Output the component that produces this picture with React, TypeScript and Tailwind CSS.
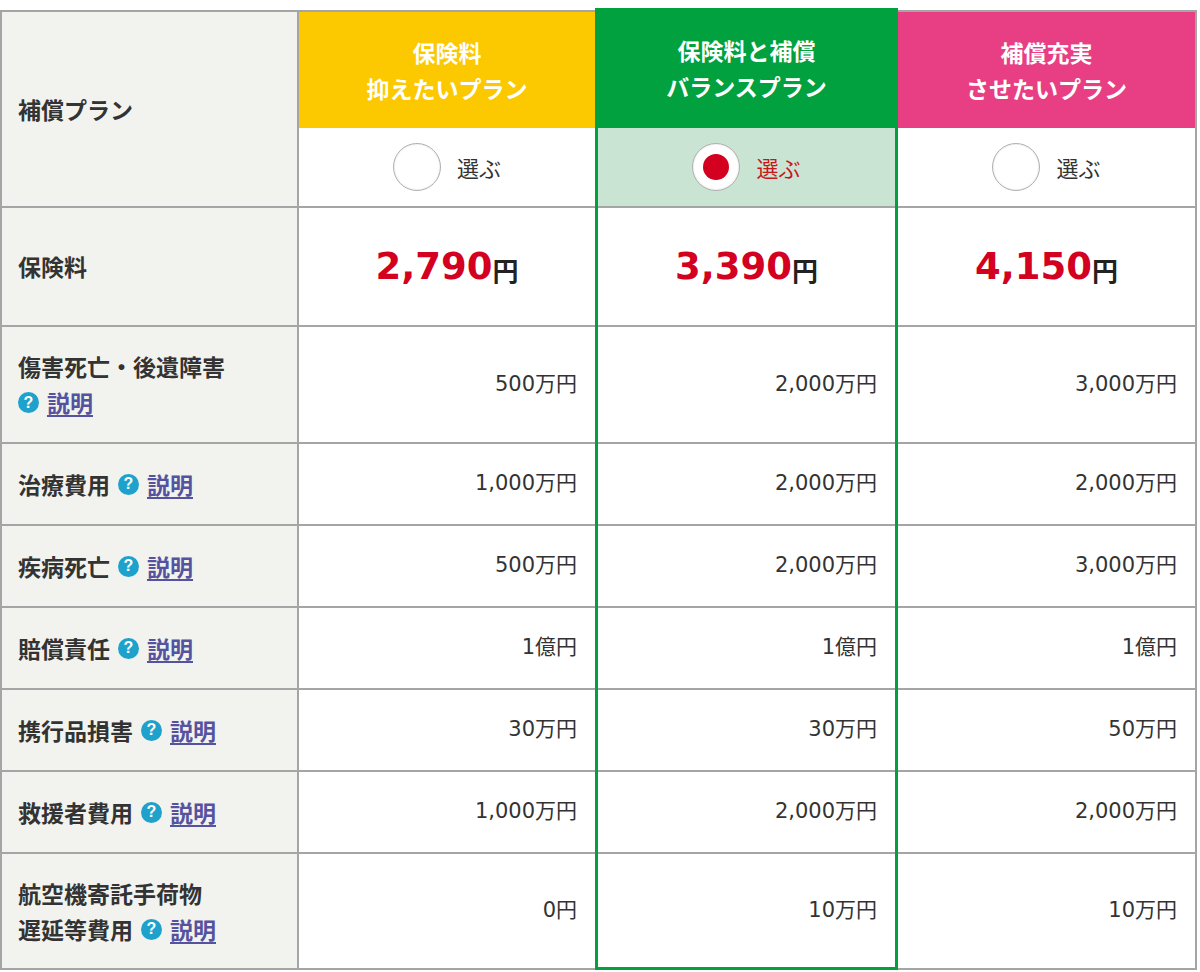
import React from "react";

type Row = {
  lines: string[];
  values: [string, string, string];
  h: number;
};

const rows: Row[] = [
  { lines: ["傷害死亡・後遺障害", ""], values: ["500万円", "2,000万円", "3,000万円"], h: 117 },
  { lines: ["治療費用"], values: ["1,000万円", "2,000万円", "2,000万円"], h: 82 },
  { lines: ["疾病死亡"], values: ["500万円", "2,000万円", "3,000万円"], h: 82 },
  { lines: ["賠償責任"], values: ["1億円", "1億円", "1億円"], h: 82 },
  { lines: ["携行品損害"], values: ["30万円", "30万円", "50万円"], h: 82 },
  { lines: ["救援者費用"], values: ["1,000万円", "2,000万円", "2,000万円"], h: 82 },
  { lines: ["航空機寄託手荷物", "遅延等費用"], values: ["0円", "10万円", "10万円"], h: 116 },
];

const plans = [
  { title: ["保険料", "抑えたいプラン"], price: "2,790", selected: false },
  { title: ["保険料と補償", "バランスプラン"], price: "3,390", selected: true },
  { title: ["補償充実", "させたいプラン"], price: "4,150", selected: false },
];

function Help() {
  return (
    <span className="flex items-center gap-2">
      <span className="w-[21px] h-[21px] rounded-full bg-[#1ea2cc] text-white text-[16px] font-bold flex items-center justify-center font-['Liberation_Sans',sans-serif] leading-none">
        ?
      </span>
      <span className="text-[#5553a0] underline underline-offset-[3px]">説明</span>
    </span>
  );
}

function Radio({ selected }: { selected: boolean }) {
  return (
    <div className="flex items-center justify-center gap-[16px]">
      <span className="w-12 h-12 rounded-full bg-white border border-[#b0b0b0] shadow-[inset_0_0_2px_rgba(0,0,0,0.15)] flex items-center justify-center">
        {selected && <span className="w-[26px] h-[26px] rounded-full bg-[#d3001f]" />}
      </span>
      <span className={selected ? "text-[22px] text-[#c8161d]" : "text-[22px] text-[#333]"}>選ぶ</span>
    </div>
  );
}

function LabelColumn() {
  return (
    <div className="w-[299px] mt-[2px] flex flex-col border-t-2 border-x-2 border-[#a5a5a5] bg-[#f2f2ee] text-[23px] font-bold text-[#333]">
      <div className="h-[196px] flex items-center pl-4 border-b-2 border-[#a5a5a5]">補償プラン</div>
      <div className="h-[119px] flex items-center pl-4 border-b-2 border-[#a5a5a5]">保険料</div>
      {rows.map((r, i) => (
        <div
          key={i}
          style={{ height: r.h }}
          className="flex flex-col justify-center pl-4 border-b-2 border-[#a5a5a5]"
        >
          {r.lines.map((l, j) => (
            <div key={j} className="flex items-center gap-2 h-[36px]">
              {l && <span>{l}</span>}
              {j === r.lines.length - 1 && <Help />}
            </div>
          ))}
        </div>
      ))}
    </div>
  );
}

function PlanColumn({ idx }: { idx: number }) {
  const plan = plans[idx];
  const mid = idx === 1;
  const head =
    idx === 0 ? "bg-[#fcc800] h-[116px]" : idx === 1 ? "bg-[#00a13e] h-[120px]" : "bg-[#e83e84] h-[116px]";
  const wrap =
    idx === 0
      ? "w-[296px] mt-[2px] border-t-2 border-[#a5a5a5]"
      : idx === 1
      ? "w-[303px] border-x-[3px] border-b-[3px] border-[#00a13e]"
      : "w-[299px] mt-[2px] border-t-2 border-r-2 border-[#a5a5a5]";
  return (
    <div className={`flex flex-col bg-white ${wrap}`}>
      <div className={`${head} flex flex-col items-center justify-center text-white text-[23px] font-bold leading-[36px]`}>
        {plan.title.map((t) => (
          <div key={t}>{t}</div>
        ))}
      </div>
      <div
        className={`h-[80px] flex items-center justify-center border-b-2 border-[#a5a5a5] ${
          mid ? "bg-[#c9e4d3]" : ""
        }`}
      >
        <Radio selected={plan.selected} />
      </div>
      <div className="h-[119px] flex items-center justify-center border-b-2 border-[#a5a5a5] font-bold">
        <span className="text-[37px] text-[#d3001f] font-['DejaVu_Sans',sans-serif]">{plan.price}</span>
        <span className="text-[26px] text-[#222] mt-[6px]">円</span>
      </div>
      {rows.map((r, i) => {
        const last = i === rows.length - 1;
        const h = mid && last ? r.h - 3 : r.h;
        return (
          <div
            key={i}
            style={{ height: h }}
            className={`flex items-center justify-end pr-[18px] text-[21px] text-[#333] font-['DejaVu_Sans','Noto_Sans_CJK_JP',sans-serif] ${
              mid && last ? "" : "border-b-2 border-[#a5a5a5]"
            }`}
          >
            {r.values[idx]}
          </div>
        );
      })}
    </div>
  );
}

export default function App() {
  return (
    <div className="w-[1200px] h-[972px] bg-white pt-[8px] font-['Noto_Sans_CJK_JP','Noto_Sans',sans-serif]">
      <div className="flex items-start">
        <LabelColumn />
        <PlanColumn idx={0} />
        <PlanColumn idx={1} />
        <PlanColumn idx={2} />
      </div>
    </div>
  );
}
